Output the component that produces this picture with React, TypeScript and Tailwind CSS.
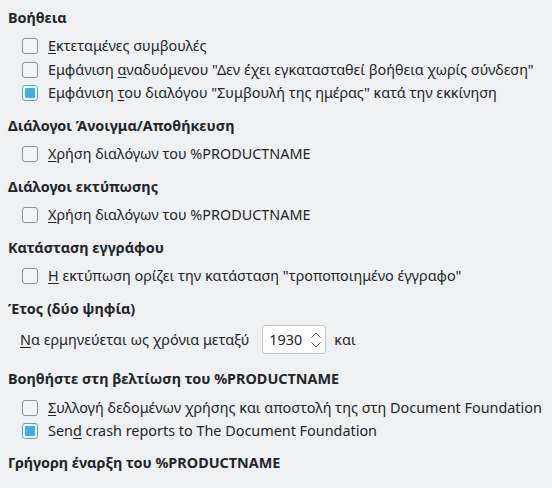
import React from "react"

function Box({ checked }: { checked?: boolean }) {
  if (checked) {
    return (
      <span className="flex h-4 w-4 shrink-0 items-center justify-center rounded-[3px] border border-[#3daee9] bg-[#fcfcfc]">
        <span className="h-[10px] w-[10px] rounded-[1px] bg-[#3daee9]" />
      </span>
    )
  }
  return <span className="h-4 w-4 shrink-0 rounded-[3px] border border-[#8e9194] bg-[#f3f4f5]" />
}

function Check({ checked, children }: { checked?: boolean; children: React.ReactNode }) {
  return (
    <div className="flex h-[23.5px] items-center gap-[10px] pl-[14px]">
      <Box checked={checked} />
      <span className="whitespace-nowrap">{children}</span>
    </div>
  )
}

function Section({ title, children }: { title: string; children: React.ReactNode }) {
  return (
    <div className="mb-[10.75px]">
      <h2 className="h-5 font-bold leading-5">{title}</h2>
      <div className="pt-[6.75px]">{children}</div>
    </div>
  )
}

const U = ({ children }: { children: string }) => <span className="underline underline-offset-2">{children}</span>

export default function App() {
  return (
    <div className="h-[488px] w-[552px] overflow-hidden bg-[#eff0f1] px-2 pt-[7.5px] text-[14.4px] leading-5 text-[#232629] [font-family:'Noto_Sans',sans-serif]">
      <Section title="Βοήθεια">
        <Check><U>Ε</U>κτεταμένες συμβουλές</Check>
        <Check>Εμφάνιση <U>α</U>ναδυόμενου "Δεν έχει εγκατασταθεί βοήθεια χωρίς σύνδεση"</Check>
        <Check checked>Εμφάνιση <U>τ</U>ου διαλόγου "Συμβουλή της ημέρας" κατά την εκκίνηση</Check>
      </Section>

      <Section title="Διάλογοι Άνοιγμα/Αποθήκευση">
        <Check><U>Χ</U>ρήση διαλόγων του %PRODUCTNAME</Check>
      </Section>

      <Section title="Διάλογοι εκτύπωσης">
        <Check><U>Χ</U>ρήση διαλόγων του %PRODUCTNAME</Check>
      </Section>

      <Section title="Κατάσταση εγγράφου">
        <Check><U>Η</U> εκτύπωση ορίζει την κατάσταση "τροποποιημένο έγγραφο"</Check>
      </Section>

      <div className="mb-[15px]">
        <h2 className="h-5 font-bold leading-5">Έτος (δύο ψηφία)</h2>
        <div className="flex items-center pl-3 pt-[6.75px]">
          <span className="whitespace-nowrap"><U>Ν</U>α ερμηνεύεται ως χρόνια μεταξύ</span>
          <div className="ml-[13px] flex h-[29px] w-16 items-center justify-between rounded-[3px] border border-[#c2c4c6] bg-[#fcfcfc] pl-[6px] pr-[3px]">
            <span>1930</span>
            <svg width="12" height="20" viewBox="0 0 12 20" fill="none" stroke="#5c6066" strokeWidth="1">
              <path d="M1.5 7.5 L6 3 L10.5 7.5" />
              <path d="M1.5 12.5 L6 17 L10.5 12.5" />
            </svg>
          </div>
          <span className="ml-2">και</span>
        </div>
      </div>

      <div className="mb-[10px]">
        <h2 className="h-5 font-bold leading-5">Βοηθήστε στη βελτίωση του %PRODUCTNAME</h2>
        <div className="pt-[6.75px]">
          <Check><U>Σ</U>υλλογή δεδομένων χρήσης και αποστολή της στη Document Foundation</Check>
          <Check checked>Sen<U>d</U> crash reports to The Document Foundation</Check>
        </div>
      </div>

      <h2 className="h-5 font-bold leading-5">Γρήγορη έναρξη του %PRODUCTNAME</h2>
    </div>
  )
}
